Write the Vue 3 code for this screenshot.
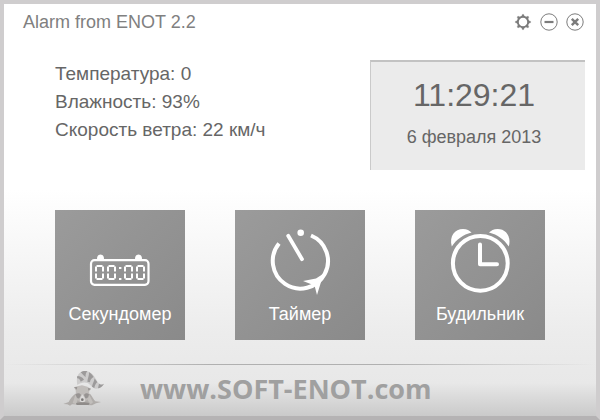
<template>
  <div class="window">
    <header class="title-bar">
      <h1>Alarm from ENOT 2.2</h1>
      <div class="controls">
        <button type="button" aria-label="Настройки">
          <svg width="18" height="18" viewBox="0 0 18 18" fill="none" stroke="#7c7c7c">
            <circle cx="9" cy="9" r="5.2" stroke-width="1.9" />
            <path
              v-for="angle in gearTeeth"
              :key="angle"
              d="M7.4 4L8.4 1.4H9.6L10.6 4z"
              fill="#7c7c7c"
              stroke-width="0.4"
              :transform="`rotate(${angle} 9 9)`"
            />
          </svg>
        </button>
        <button type="button" aria-label="Свернуть">
          <svg width="18" height="18" viewBox="0 0 18 18" fill="none" stroke="#7c7c7c">
            <circle cx="9" cy="9" r="8.2" stroke-width="1" />
            <path d="M4.5 9h9" stroke-width="2.2" />
          </svg>
        </button>
        <button type="button" aria-label="Закрыть">
          <svg width="18" height="18" viewBox="0 0 18 18" fill="none" stroke="#7c7c7c">
            <circle cx="9" cy="9" r="8.2" stroke-width="1" />
            <path d="M5.8 5.8l6.4 6.4M12.2 5.8l-6.4 6.4" stroke-width="2.4" />
          </svg>
        </button>
      </div>
    </header>

    <section class="info">
      <ul class="weather">
        <li v-for="item in weather" :key="item.name">{{ item.name }}: {{ item.value }}</li>
      </ul>
      <div class="clock">
        <div class="time">{{ time }}</div>
        <div class="date">{{ date }}</div>
      </div>
    </section>

    <nav class="tiles">
      <button type="button" class="tile" @click="mode = 'stopwatch'">
        <svg width="130" height="90" viewBox="0 0 130 90" fill="none" stroke="#fff">
          <path d="M42 49a3.5 4.6 0 0 1 7 0zM80 49a3.5 4.6 0 0 1 7 0z" fill="#fff" stroke="none" />
          <rect x="36" y="50.2" width="57.5" height="24.6" rx="3.5" stroke-width="2.2" />
          <g v-for="x in digits" :key="x" stroke-width="2">
            <path :d="`M${x + 1.5} 56h6M${x + 1.5} 69h6`" />
            <path :d="`M${x + 1} 56.6v5M${x + 8} 56.6v5M${x + 1} 63.4v5M${x + 8} 63.4v5`" />
          </g>
          <path d="M64 58h2.4M64 69h2.4" stroke-width="2.2" />
        </svg>
        <span>Секундомер</span>
      </button>
      <button type="button" class="tile" @click="mode = 'timer'">
        <svg width="130" height="90" viewBox="0 0 130 90" fill="none" stroke="#fff">
          <path d="M76 25.5A27.6 27.6 0 1 1 44 33.5" stroke-width="4" />
          <path d="M53.2 25.8L67 49.2" stroke-width="3.8" stroke-linecap="round" />
          <circle cx="65.7" cy="22.7" r="3.3" fill="#fff" stroke="none" />
          <path d="M68 71L81 68.5L91 62L86 72L82 85L79.5 75.5Z" fill="#fff" stroke="none" />
        </svg>
        <span>Таймер</span>
      </button>
      <button type="button" class="tile" @click="mode = 'alarm'">
        <svg width="130" height="90" viewBox="0 0 130 90" fill="none" stroke="#fff">
          <circle cx="65.3" cy="53.3" r="27.4" stroke-width="4" />
          <g fill="#fff" stroke="none">
            <path d="M36.8 36.5C34 26 40 19 48 19C52 19 54.5 20.5 56.6 22.6C48 24.8 41.5 29.5 36.8 36.5z" />
            <path d="M93.8 36.5C96.6 26 90.6 19 82.6 19C78.6 19 76.1 20.5 74 22.6C82.6 24.8 89.1 29.5 93.8 36.5z" />
          </g>
          <path d="M65 34.5V54.2H82" stroke-width="4" stroke-linecap="round" stroke-linejoin="round" />
        </svg>
        <span>Будильник</span>
      </button>
    </nav>

    <footer class="footer">
      <svg width="42" height="36" viewBox="9 9 126 108" opacity="0.85">
        <!-- tail -->
        <path d="M52 54C48 34 52 13 74 12C96 12 104 30 112 44C117 51 124 54 132 50C128 58 120 65 108 65C96 64 92 52 82 48C72 44 60 48 52 54z" fill="#c9c8c8" />
        <g fill="#8f8d8d">
          <path d="M62 16C68 12 76 11 82 13C77 18 76 25 77 31C70 24 66 20 62 16z" />
          <path d="M52 27C60 27 68 31 72 38L62 44C60 37 56 33 51 34z" />
          <path d="M87 16C94 20 98 25 101 30C94 33 90 39 90 46L82 44C83 32 88 26 87 16z" />
          <path d="M104 34C107 39 109 42 112 45C107 50 104 56 103 63L96 59C98 49 102 44 104 34z" />
          <path d="M117 50C122 54 127 54 132 50C128 58 120 63 114 64z" />
        </g>
        <!-- body and paws -->
        <path d="M10 111L26 105C30 96 38 86 46 80L90 80C96 88 102 98 106 103L123 105L108 109L96 115L36 112L30 116L22 112z" fill="#aaa6a3" />
        <path d="M46 84L38 108L48 112L54 96zM88 84L99 106L92 112L82 98z" fill="#bfbbb8" />
        <!-- head -->
        <path d="M42 61L52 58L66 55L82 59L93 66L88 72L85 95L74 105H60L49 95L47 70z" fill="#bbb7b4" />
        <path d="M42 60L52 60L50 68zM93 65L84 63L85 71z" fill="#8b8785" />
        <path d="M47 82C52 77 61 78 63 84L58 94C53 96 49 92 47 82zM87 82C82 77 75 78 72 84L76 94C82 96 86 90 87 82z" fill="#8b8786" />
        <path d="M61 93L67 82L74 93L75 103L67 107L60 103z" fill="#dddbda" />
        <ellipse cx="67" cy="98" rx="4" ry="4" fill="#696665" />
        <path d="M48 109C56 105 78 105 88 109L86 114H50z" fill="#84807e" />
      </svg>
      <a href="#">www.SOFT-ENOT.com</a>
    </footer>
  </div>
</template>

<script setup>
import { ref } from 'vue';

const time = ref('11:29:21');
const date = ref('6 февраля 2013');
const mode = ref('');

const weather = ref([
  { name: 'Температура', value: '0' },
  { name: 'Влажность', value: '93%' },
  { name: 'Скорость ветра', value: '22 км/ч' },
]);

const gearTeeth = [0, 45, 90, 135, 180, 225, 270, 315];
// left edge of each digit on the stopwatch display
const digits = [40, 52, 69, 81];
</script>

<style>
body {
  margin: 0;
}
</style>

<style scoped>
.window {
  box-sizing: border-box;
  min-height: 100vh;
  display: flex;
  flex-direction: column;
  border: 4px solid #cfcdce;
  border-bottom-color: #b5b3b4;
  background: linear-gradient(#fff 0, #fff 45%, #ececec 80%, #e8e8e8 92%, #dcdcdc 95%, #cacaca 100%);
  font-family: "Liberation Sans", Arial, sans-serif;
  color: #666;
}

.title-bar {
  display: flex;
  justify-content: space-between;
  align-items: center;
  height: 36px;
  padding: 0 12px 0 19px;
}

h1 {
  margin: 0;
  font-size: 18px;
  font-weight: normal;
  color: #808080;
}

.controls {
  display: flex;
  gap: 8px;
}

button {
  padding: 0;
  border: none;
  background: none;
  font-family: inherit;
  cursor: pointer;
}

.controls svg {
  display: block;
}

.info {
  display: flex;
  justify-content: space-between;
  align-items: flex-start;
  padding: 20px 11px 0 51px;
}

.weather {
  margin: 0;
  padding: 0;
  list-style: none;
  font-size: 19px;
  line-height: 28px;
}

.clock {
  box-sizing: border-box;
  width: 215px;
  height: 110px;
  padding: 15px 8px 0 0;
  border-top: 2px solid #c2c2c2;
  border-left: 1px solid #cacaca;
  background: #ebebeb;
  text-align: center;
}

.time {
  font-size: 32px;
  line-height: 36px;
}

.date {
  margin-top: 12px;
  font-size: 18px;
  line-height: 24px;
}

.tiles {
  display: flex;
  justify-content: space-between;
  padding: 40px 51px 24px;
}

.tile {
  display: flex;
  flex-direction: column;
  align-items: center;
  width: 130px;
  height: 130px;
  background: linear-gradient(135deg, #9b9b9b, #8a8a8a);
  color: #fff;
  font-size: 18px;
  line-height: 28px;
}

.footer {
  position: relative;
  display: flex;
  align-items: center;
  gap: 35px;
  flex: 1;
  padding: 0 59px 4px;
}

.footer::before {
  content: "";
  position: absolute;
  top: 0;
  left: 0;
  right: 0;
  height: 1px;
  background: linear-gradient(90deg, transparent, #b0b0b0 35%, #b0b0b0 65%, transparent);
}

.footer a {
  font-family: "Open Sans", "Noto Sans", sans-serif;
  font-size: 27px;
  font-weight: bold;
  color: #a0a0a0;
  text-decoration: none;
}
</style>
